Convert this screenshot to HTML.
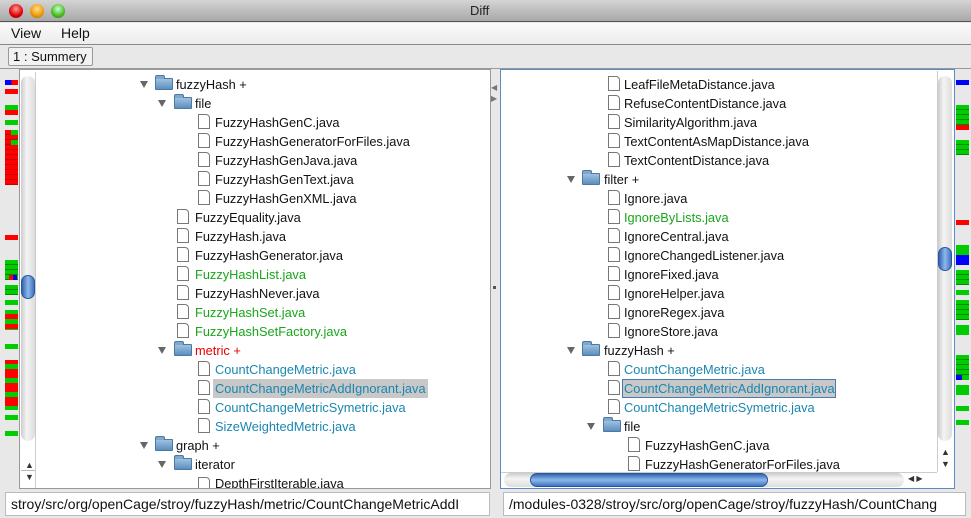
<!DOCTYPE html>
<html><head><style>
*{margin:0;padding:0;box-sizing:border-box}
body{width:971px;height:518px;overflow:hidden;background:#e8e8e8;font-family:"Liberation Sans",sans-serif;position:relative}
.a{position:absolute}
.r{position:absolute;height:19px;line-height:19px;font-size:12.8px;color:#111;white-space:nowrap}
.g{color:#1aa51a}.b{color:#1a87b0}.red{color:#e80000}
.tri{position:absolute;width:0;height:0;border-left:4.5px solid transparent;border-right:4.5px solid transparent;border-top:7px solid #666}
.fold{position:absolute;width:18px;height:12px;background:linear-gradient(#9fc2e0,#5b8fbf);border:1px solid #4c78a3;border-radius:1px}
.fold:before{content:"";position:absolute;left:-1px;top:-4px;width:8px;height:3px;background:#7fa8cf;border:1px solid #4c78a3;border-bottom:none;border-radius:2px 2px 0 0}
.doc{position:absolute;width:12px;height:15px;background:#fff;border:1px solid #777;border-top-right-radius:4px}
.m{position:absolute;width:13px}
</style></head><body>
<div class="a" style="left:0;top:0;width:971px;height:22px;background:linear-gradient(#d4d4d4,#a8a8a8);border-bottom:1px solid #555"></div>
<div class="a" style="left:9px;top:4px;width:14px;height:14px;border-radius:50%;background:radial-gradient(circle at 50% 35%,#f99,#d00 60%,#900)"></div>
<div class="a" style="left:30px;top:4px;width:14px;height:14px;border-radius:50%;background:radial-gradient(circle at 50% 35%,#fd9,#e90 60%,#a50)"></div>
<div class="a" style="left:51px;top:4px;width:14px;height:14px;border-radius:50%;background:radial-gradient(circle at 50% 35%,#cfc,#4b2 60%,#270)"></div>
<div class="a" style="left:470px;top:3px;font-size:13px;color:#222">Diff</div>
<div class="a" style="left:0;top:23px;width:971px;height:22px;background:linear-gradient(#fafafa,#ececec);border-bottom:1px solid #888"></div>
<div class="a" style="left:11px;top:25px;font-size:14px;color:#111">View</div>
<div class="a" style="left:61px;top:25px;font-size:14px;color:#111">Help</div>
<div class="a" style="left:8px;top:47px;width:85px;height:19px;border:1px solid #999;border-radius:2px;background:#f2f2f2;font-size:13px;line-height:17px;padding-left:4px;color:#111">1 : Summery</div>
<div class="a" style="left:0;top:68px;width:971px;height:1px;background:#999"></div>

<div class="a" style="left:19px;top:69px;width:472px;height:420px;background:#fff;border:1px solid #999"></div>
<div class="a" style="left:20px;top:72px;width:16px;height:416px;border-right:1px solid #ccc;background:#fff"></div>
<div class="a" style="left:21px;top:76px;width:14px;height:365px;border-radius:7px;background:linear-gradient(90deg,#ccc,#f4f4f4 40%,#ddd)"></div>
<div class="a" style="left:21px;top:275px;width:14px;height:24px;border-radius:7px;background:linear-gradient(90deg,#2f64b0,#8fb8ea 50%,#3c73c0);border:1px solid #29559a"></div>
<div class="a" style="left:25px;top:460px;font-size:9px;color:#333">▲</div>
<div class="a" style="left:25px;top:472px;font-size:9px;color:#333">▼</div>
<div class="a" style="left:21px;top:470px;width:14px;height:1px;background:#bbb"></div>

<div class="tri" style="left:140px;top:81px"></div><div class="fold" style="left:155px;top:78px"></div><div class="r" style="left:176px;top:75px">fuzzyHash +</div>
<div class="tri" style="left:158px;top:100px"></div><div class="fold" style="left:174px;top:97px"></div><div class="r" style="left:195px;top:94px">file</div>
<div class="doc" style="left:198px;top:114px"></div><div class="r" style="left:215px;top:113px">FuzzyHashGenC.java</div>
<div class="doc" style="left:198px;top:133px"></div><div class="r" style="left:215px;top:132px">FuzzyHashGeneratorForFiles.java</div>
<div class="doc" style="left:198px;top:152px"></div><div class="r" style="left:215px;top:151px">FuzzyHashGenJava.java</div>
<div class="doc" style="left:198px;top:171px"></div><div class="r" style="left:215px;top:170px">FuzzyHashGenText.java</div>
<div class="doc" style="left:198px;top:190px"></div><div class="r" style="left:215px;top:189px">FuzzyHashGenXML.java</div>
<div class="doc" style="left:177px;top:209px"></div><div class="r" style="left:195px;top:208px">FuzzyEquality.java</div>
<div class="doc" style="left:177px;top:228px"></div><div class="r" style="left:195px;top:227px">FuzzyHash.java</div>
<div class="doc" style="left:177px;top:247px"></div><div class="r" style="left:195px;top:246px">FuzzyHashGenerator.java</div>
<div class="doc" style="left:177px;top:266px"></div><div class="r g" style="left:195px;top:265px">FuzzyHashList.java</div>
<div class="doc" style="left:177px;top:285px"></div><div class="r" style="left:195px;top:284px">FuzzyHashNever.java</div>
<div class="doc" style="left:177px;top:304px"></div><div class="r g" style="left:195px;top:303px">FuzzyHashSet.java</div>
<div class="doc" style="left:177px;top:323px"></div><div class="r g" style="left:195px;top:322px">FuzzyHashSetFactory.java</div>
<div class="tri" style="left:158px;top:347px"></div><div class="fold" style="left:174px;top:344px"></div><div class="r red" style="left:195px;top:341px">metric +</div>
<div class="doc" style="left:198px;top:361px"></div><div class="r b" style="left:215px;top:360px">CountChangeMetric.java</div>
<div class="a" style="left:213px;top:379px;width:215px;height:19px;background:#c8c8c8"></div>
<div class="doc" style="left:198px;top:380px"></div><div class="r b" style="left:215px;top:379px">CountChangeMetricAddIgnorant.java</div>
<div class="doc" style="left:198px;top:399px"></div><div class="r b" style="left:215px;top:398px">CountChangeMetricSymetric.java</div>
<div class="doc" style="left:198px;top:418px"></div><div class="r b" style="left:215px;top:417px">SizeWeightedMetric.java</div>
<div class="tri" style="left:140px;top:442px"></div><div class="fold" style="left:155px;top:439px"></div><div class="r" style="left:176px;top:436px">graph +</div>
<div class="tri" style="left:158px;top:461px"></div><div class="fold" style="left:174px;top:458px"></div><div class="r" style="left:195px;top:455px">iterator</div>
<div class="a" style="left:196px;top:475px;width:290px;height:13px;overflow:hidden"><div class="doc" style="left:2px;top:2px"></div><div class="r" style="left:19px;top:-1px">DepthFirstIterable.java</div></div>

<div class="a" style="left:491px;top:83px;font-size:8px;color:#777">◀</div>
<div class="a" style="left:491px;top:94px;font-size:8px;color:#777">▶</div>
<div class="a" style="left:493px;top:286px;width:3px;height:3px;background:#555"></div>

<div class="a" style="left:500px;top:69px;width:455px;height:420px;background:#fff;border:1px solid #5b8ac4"></div>
<div class="a" style="left:937px;top:71px;width:16px;height:401px;background:#fff;border-left:1px solid #ccc"></div>
<div class="a" style="left:938px;top:76px;width:14px;height:365px;border-radius:7px;background:linear-gradient(90deg,#ccc,#f4f4f4 40%,#ddd)"></div>
<div class="a" style="left:938px;top:247px;width:14px;height:24px;border-radius:7px;background:linear-gradient(90deg,#2f64b0,#8fb8ea 50%,#3c73c0);border:1px solid #29559a"></div>
<div class="a" style="left:941px;top:447px;font-size:9px;color:#333">▲</div>
<div class="a" style="left:941px;top:459px;font-size:9px;color:#333">▼</div>
<div class="a" style="left:501px;top:472px;width:436px;height:16px;background:#fff;border-top:1px solid #ccc"></div>
<div class="a" style="left:504px;top:473px;width:400px;height:14px;border-radius:7px;background:linear-gradient(#ccc,#f4f4f4 40%,#ddd)"></div>
<div class="a" style="left:530px;top:473px;width:238px;height:14px;border-radius:7px;background:linear-gradient(#2f64b0,#8fb8ea 50%,#3c73c0);border:1px solid #29559a"></div>
<div class="a" style="left:908px;top:474px;font-size:8px;color:#333">◀ ▶</div>

<div class="doc" style="left:608px;top:76px"></div><div class="r" style="left:624px;top:75px">LeafFileMetaDistance.java</div>
<div class="doc" style="left:608px;top:95px"></div><div class="r" style="left:624px;top:94px">RefuseContentDistance.java</div>
<div class="doc" style="left:608px;top:114px"></div><div class="r" style="left:624px;top:113px">SimilarityAlgorithm.java</div>
<div class="doc" style="left:608px;top:133px"></div><div class="r" style="left:624px;top:132px">TextContentAsMapDistance.java</div>
<div class="doc" style="left:608px;top:152px"></div><div class="r" style="left:624px;top:151px">TextContentDistance.java</div>
<div class="tri" style="left:567px;top:176px"></div><div class="fold" style="left:582px;top:173px"></div><div class="r" style="left:604px;top:170px">filter +</div>
<div class="doc" style="left:608px;top:190px"></div><div class="r" style="left:624px;top:189px">Ignore.java</div>
<div class="doc" style="left:608px;top:209px"></div><div class="r g" style="left:624px;top:208px">IgnoreByLists.java</div>
<div class="doc" style="left:608px;top:228px"></div><div class="r" style="left:624px;top:227px">IgnoreCentral.java</div>
<div class="doc" style="left:608px;top:247px"></div><div class="r" style="left:624px;top:246px">IgnoreChangedListener.java</div>
<div class="doc" style="left:608px;top:266px"></div><div class="r" style="left:624px;top:265px">IgnoreFixed.java</div>
<div class="doc" style="left:608px;top:285px"></div><div class="r" style="left:624px;top:284px">IgnoreHelper.java</div>
<div class="doc" style="left:608px;top:304px"></div><div class="r" style="left:624px;top:303px">IgnoreRegex.java</div>
<div class="doc" style="left:608px;top:323px"></div><div class="r" style="left:624px;top:322px">IgnoreStore.java</div>
<div class="tri" style="left:567px;top:347px"></div><div class="fold" style="left:582px;top:344px"></div><div class="r" style="left:604px;top:341px">fuzzyHash +</div>
<div class="doc" style="left:608px;top:361px"></div><div class="r b" style="left:624px;top:360px">CountChangeMetric.java</div>
<div class="a" style="left:622px;top:379px;width:214px;height:19px;background:#c8c8c8;border:1px solid #4a78b0"></div>
<div class="doc" style="left:608px;top:380px"></div><div class="r b" style="left:624px;top:379px">CountChangeMetricAddIgnorant.java</div>
<div class="doc" style="left:608px;top:399px"></div><div class="r b" style="left:624px;top:398px">CountChangeMetricSymetric.java</div>
<div class="tri" style="left:587px;top:423px"></div><div class="fold" style="left:603px;top:420px"></div><div class="r" style="left:624px;top:417px">file</div>
<div class="doc" style="left:628px;top:437px"></div><div class="r" style="left:645px;top:436px">FuzzyHashGenC.java</div>
<div class="doc" style="left:628px;top:456px"></div><div class="r" style="left:645px;top:455px">FuzzyHashGeneratorForFiles.java</div>

<div class="m" style="left:5px;top:80px;height:5px;background:linear-gradient(90deg,#00f 50%,#f00 50%)"></div>
<div class="m" style="left:5px;top:89px;height:5px;background:#f00"></div>
<div class="m" style="left:5px;top:105px;height:10px;background:linear-gradient(#0c0 50%,#f00 50%)"></div>
<div class="m" style="left:5px;top:120px;height:5px;background:#0c0"></div>
<div class="m" style="left:5px;top:130px;height:55px;background:repeating-linear-gradient(#f00 0 4px,#c00 4px 5px)"></div>
<div class="a" style="left:11px;top:130px;width:7px;height:5px;background:#0c0"></div>
<div class="a" style="left:11px;top:140px;width:7px;height:5px;background:#0c0"></div>
<div class="m" style="left:5px;top:235px;height:5px;background:#f00"></div>
<div class="m" style="left:5px;top:260px;height:20px;background:repeating-linear-gradient(#0c0 0 4px,#080 4px 5px)"></div>
<div class="a" style="left:9px;top:275px;width:4px;height:5px;background:#f00"></div><div class="a" style="left:13px;top:275px;width:4px;height:5px;background:#00f"></div>
<div class="m" style="left:5px;top:285px;height:10px;background:repeating-linear-gradient(#0c0 0 4px,#080 4px 5px)"></div>
<div class="m" style="left:5px;top:300px;height:5px;background:#0c0"></div>
<div class="m" style="left:5px;top:310px;height:20px;background:repeating-linear-gradient(#0c0 0 4px,#f00 4px 9px,#0c0 9px 10px)"></div>
<div class="m" style="left:5px;top:344px;height:5px;background:#0c0"></div>
<div class="m" style="left:5px;top:360px;height:50px;background:repeating-linear-gradient(#f00 0 4px,#0c0 4px 9px,#f00 9px 14px)"></div>
<div class="m" style="left:5px;top:415px;height:5px;background:#0c0"></div>
<div class="m" style="left:5px;top:431px;height:5px;background:#0c0"></div>

<div class="m" style="left:956px;top:80px;height:5px;background:#00f"></div>
<div class="m" style="left:956px;top:105px;height:20px;background:repeating-linear-gradient(#0c0 0 4px,#080 4px 5px)"></div>
<div class="m" style="left:956px;top:125px;height:5px;background:#f00"></div>
<div class="m" style="left:956px;top:140px;height:15px;background:repeating-linear-gradient(#0c0 0 4px,#080 4px 5px)"></div>
<div class="m" style="left:956px;top:220px;height:5px;background:#f00"></div>
<div class="m" style="left:956px;top:245px;height:10px;background:#0c0"></div>
<div class="m" style="left:956px;top:255px;height:10px;background:#00f"></div>
<div class="m" style="left:956px;top:270px;height:15px;background:repeating-linear-gradient(#0c0 0 4px,#080 4px 5px)"></div>
<div class="m" style="left:956px;top:290px;height:5px;background:#0c0"></div>
<div class="m" style="left:956px;top:300px;height:20px;background:repeating-linear-gradient(#0c0 0 4px,#080 4px 5px)"></div>
<div class="m" style="left:956px;top:325px;height:10px;background:#0c0"></div>
<div class="m" style="left:956px;top:355px;height:20px;background:repeating-linear-gradient(#0c0 0 4px,#080 4px 5px)"></div>
<div class="a" style="left:956px;top:375px;width:6px;height:5px;background:#00f"></div><div class="a" style="left:962px;top:375px;width:7px;height:5px;background:#0c0"></div>
<div class="m" style="left:956px;top:385px;height:10px;background:#0c0"></div>
<div class="m" style="left:956px;top:406px;height:5px;background:#0c0"></div>
<div class="m" style="left:956px;top:420px;height:5px;background:#0c0"></div>

<div class="a" style="left:5px;top:492px;width:485px;height:24px;background:#fff;border:1px solid #bbb;font-size:14px;line-height:22px;padding-left:5px;overflow:hidden;white-space:nowrap;color:#111">stroy/src/org/openCage/stroy/fuzzyHash/metric/CountChangeMetricAddI</div>
<div class="a" style="left:503px;top:492px;width:463px;height:24px;background:#fff;border:1px solid #bbb;font-size:14px;line-height:22px;padding-left:5px;overflow:hidden;white-space:nowrap;color:#111">/modules-0328/stroy/src/org/openCage/stroy/fuzzyHash/CountChang</div>
</body></html>
